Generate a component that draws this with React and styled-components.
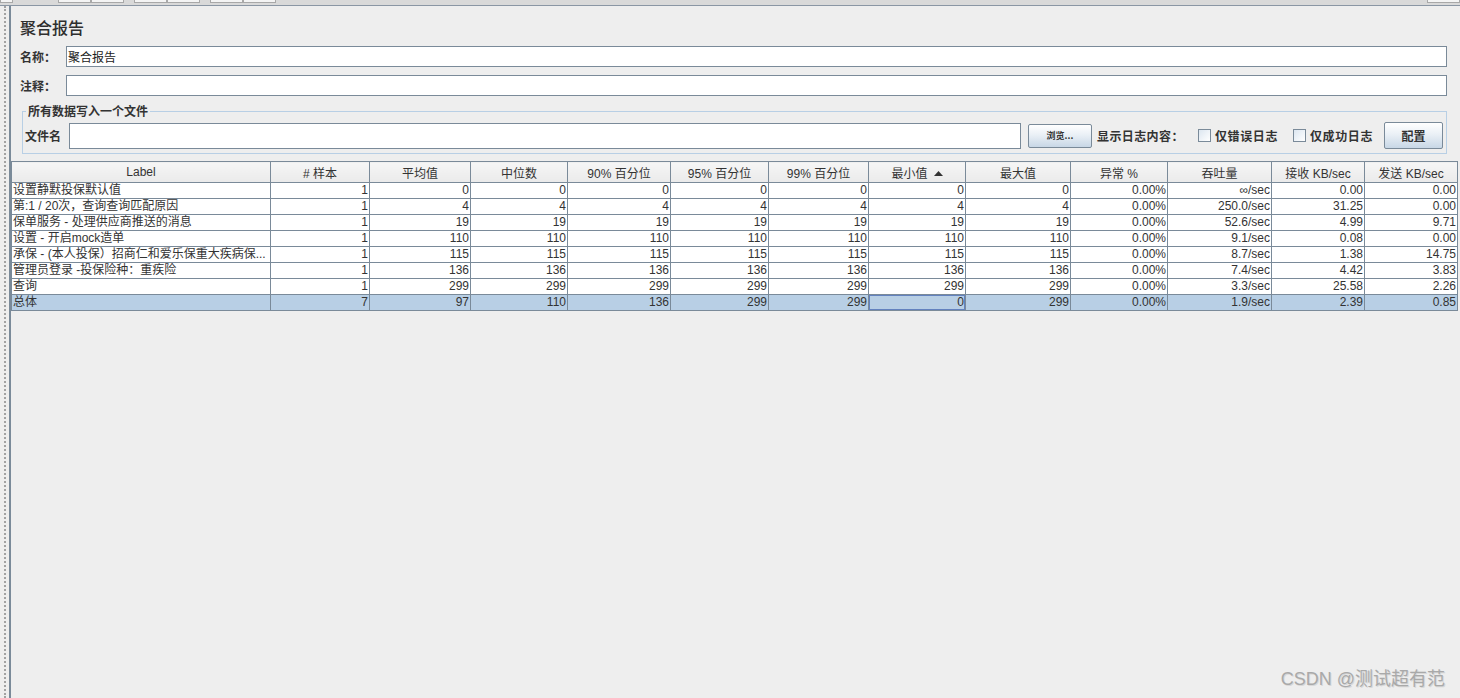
import React from "react"
import styled, { createGlobalStyle } from "styled-components"

const GlobalStyle = createGlobalStyle`
  html, body {
    margin: 0;
    padding: 0;
    background: #eeeeee;
  }
  body {
    font-family: "Liberation Sans", "Noto Sans CJK SC", sans-serif;
    font-size: 12px;
    color: #333333;
  }
`

const columns = [
  { title: "Label", width: 259 },
  { title: "# 样本", width: 99 },
  { title: "平均值", width: 101 },
  { title: "中位数", width: 97 },
  { title: "90% 百分位", width: 103 },
  { title: "95% 百分位", width: 98 },
  { title: "99% 百分位", width: 100 },
  { title: "最小值", width: 97, sorted: true },
  { title: "最大值", width: 105 },
  { title: "异常 %", width: 97 },
  { title: "吞吐量", width: 104 },
  { title: "接收 KB/sec", width: 93 },
  { title: "发送 KB/sec", width: 93 },
]

const rows = [
  ["设置静默投保默认值", "1", "0", "0", "0", "0", "0", "0", "0", "0.00%", "∞/sec", "0.00", "0.00"],
  ["第:1 / 20次，查询查询匹配原因", "1", "4", "4", "4", "4", "4", "4", "4", "0.00%", "250.0/sec", "31.25", "0.00"],
  ["保单服务 - 处理供应商推送的消息", "1", "19", "19", "19", "19", "19", "19", "19", "0.00%", "52.6/sec", "4.99", "9.71"],
  ["设置 - 开启mock造单", "1", "110", "110", "110", "110", "110", "110", "110", "0.00%", "9.1/sec", "0.08", "0.00"],
  ["承保 - (本人投保）招商仁和爱乐保重大疾病保...", "1", "115", "115", "115", "115", "115", "115", "115", "0.00%", "8.7/sec", "1.38", "14.75"],
  ["管理员登录 -投保险种：重疾险", "1", "136", "136", "136", "136", "136", "136", "136", "0.00%", "7.4/sec", "4.42", "3.83"],
  ["查询", "1", "299", "299", "299", "299", "299", "299", "299", "0.00%", "3.3/sec", "25.58", "2.26"],
]

const total = ["总体", "7", "97", "110", "136", "299", "299", "0", "299", "0.00%", "1.9/sec", "2.39", "0.85"]

const ReportPage = () => {
  return (
    <Page>
      <GlobalStyle />
      <TopStrip>
        <StripTab $w={13} />
        <StripGap $w={45} />
        <StripTab $w={33} />
        <StripTab $w={33} />
        <StripGap $w={10} />
        <StripTab $w={33} />
        <StripTab $w={33} />
        <StripGap $w={10} />
        <StripTab $w={33} />
        <StripTab $w={33} />
        <StripFill />
        <StripTab $w={33} />
      </TopStrip>
      <Main>
        <Splitter />
        <Panel>
          <Form>
            <Title>聚合报告</Title>
            <FieldRow>
              <FieldLabel $w={46}>名称：</FieldLabel>
              <TextInput defaultValue="聚合报告" />
            </FieldRow>
            <FieldRow>
              <FieldLabel $w={46}>注释：</FieldLabel>
              <TextInput defaultValue="" />
            </FieldRow>
            <FileGroup>
              <Legend>所有数据写入一个文件</Legend>
              <FileRow>
                <FieldLabel $w={44}>文件名</FieldLabel>
                <FileInput defaultValue="" />
                <BrowseButton>浏览...</BrowseButton>
                <LogLabel>显示日志内容：</LogLabel>
                <CheckItem>
                  <CheckBox />
                  <CheckText>仅错误日志</CheckText>
                </CheckItem>
                <CheckItem $last>
                  <CheckBox />
                  <CheckText>仅成功日志</CheckText>
                </CheckItem>
                <ConfigButton>配置</ConfigButton>
              </FileRow>
            </FileGroup>
          </Form>
          <Table>
            <colgroup>
              {columns.map((c) => (
                <col key={c.title} style={{ width: c.width }} />
              ))}
            </colgroup>
            <thead>
              <tr>
                {columns.map((c) => (
                  <HeadCell key={c.title}>
                    {c.title}
                    {c.sorted && <SortArrow viewBox="0 0 9 5"><path d="M0 5 L4.5 0 L9 5 Z" fill="#333" /></SortArrow>}
                  </HeadCell>
                ))}
              </tr>
            </thead>
            <tbody>
              {rows.map((r, i) => (
                <tr key={i}>
                  {r.map((v, j) => (
                    <Cell key={j} $left={j === 0}>{v}</Cell>
                  ))}
                </tr>
              ))}
              <tr>
                {total.map((v, j) => (
                  <Cell key={j} $left={j === 0} $selected $focus={j === 7}>{v}</Cell>
                ))}
              </tr>
            </tbody>
          </Table>
        </Panel>
      </Main>
      <Watermark>CSDN @测试超有范</Watermark>
    </Page>
  )
}

const Page = styled.div`
  position: relative;
  width: 1460px;
  height: 698px;
  display: flex;
  flex-direction: column;
  overflow: hidden;
  background: #eeeeee;
`

const TopStrip = styled.div`
  height: 5px;
  display: flex;
  background: #d9d9d9;
  border-bottom: 1px solid #8a96a4;
`

const StripTab = styled.div`
  width: ${(p) => p.$w}px;
  height: 3px;
  background: #f4f4f4;
  border: 1px solid #a8a8a8;
  border-top: none;
  box-sizing: border-box;
`

const StripGap = styled.div`
  width: ${(p) => p.$w}px;
`

const StripFill = styled.div`
  flex: 1;
`

const Main = styled.div`
  flex: 1;
  display: flex;
`

const Splitter = styled.div`
  width: 9px;
  position: relative;
  &::before {
    content: "";
    position: absolute;
    left: 4px;
    top: 0;
    bottom: 0;
    border-left: 2px dotted #a2a2a2;
  }
`

const Panel = styled.div`
  flex: 1;
  border-left: 2px solid #7a8a99;
  display: flex;
  flex-direction: column;
`

const Form = styled.div`
  padding: 11px 13px 0 9px;
`

const Title = styled.div`
  font-family: "Noto Sans CJK SC", sans-serif;
  font-size: 16px;
  font-weight: 500;
  line-height: 20px;
  color: #2e2e2e;
  margin-bottom: 9px;
`

const FieldRow = styled.div`
  display: flex;
  align-items: center;
  height: 21px;
  margin-bottom: 8px;
`

const FieldLabel = styled.div`
  width: ${(p) => p.$w}px;
  flex: none;
  font-family: "Noto Sans CJK SC", sans-serif;
  font-weight: bold;
  font-size: 12px;
  color: #333;
`

const TextInput = styled.input`
  flex: 1;
  min-width: 0;
  height: 21px;
  box-sizing: border-box;
  border: 1px solid #7a8a99;
  background: #fff;
  padding: 0 1px;
  font-family: "Noto Sans CJK SC", sans-serif;
  font-size: 12px;
  color: #222;
  outline: none;
`

const FileGroup = styled.fieldset`
  margin: 5px 0 0 2px;
  padding: 0 3px 4px 2px;
  border: 1px solid #b8cfe5;
  min-width: 0;
`

const Legend = styled.legend`
  padding: 0 2px;
  margin-left: 1px;
  line-height: 14px;
  font-family: "Noto Sans CJK SC", sans-serif;
  font-weight: bold;
  font-size: 12px;
  color: #333;
`

const FileRow = styled.div`
  display: flex;
  align-items: center;
  height: 27px;
  margin-top: 4px;
`

const FileInput = styled(TextInput)`
  height: 26px;
`

const BrowseButton = styled.button`
  flex: none;
  width: 64px;
  height: 24px;
  margin-left: 7px;
  border: 1px solid #7a8a99;
  border-radius: 2px;
  background: linear-gradient(to bottom, #ffffff 0%, #eaf0f6 45%, #c8d7e6 100%);
  font-family: "Noto Sans CJK SC", sans-serif;
  font-weight: bold;
  font-size: 9px;
  color: #333;
  padding: 0;
`

const ConfigButton = styled(BrowseButton)`
  width: 59px;
  height: 27px;
  margin-left: 10px;
  font-size: 12px;
`

const LogLabel = styled.div`
  flex: none;
  width: 101px;
  margin-left: 5px;
  font-family: "Noto Sans CJK SC", sans-serif;
  font-weight: bold;
  font-size: 12px;
  letter-spacing: 0.4px;
  color: #333;
  white-space: nowrap;
`

const CheckItem = styled.label`
  flex: none;
  display: flex;
  align-items: center;
  gap: 4px;
  margin-right: ${(p) => (p.$last ? 0 : 14)}px;
`

const CheckText = styled.span`
  width: 64px;
  font-family: "Noto Sans CJK SC", sans-serif;
  font-weight: bold;
  font-size: 12px;
  letter-spacing: 0.6px;
  color: #333;
  white-space: nowrap;
`

const CheckBox = styled.span`
  width: 13px;
  height: 13px;
  box-sizing: border-box;
  border: 1px solid #7a8a99;
  background: linear-gradient(135deg, #dce6f0 0%, #ffffff 100%);
`

const Table = styled.table`
  margin-top: 7px;
  width: 1446px;
  table-layout: fixed;
  border-collapse: collapse;
  font-family: "Liberation Sans", "Noto Sans CJK SC", sans-serif;
  font-size: 12px;
  color: #333;
`

const HeadCell = styled.th`
  height: 20px;
  padding: 0;
  border: 1px solid #7a8a99;
  background: linear-gradient(to bottom, #f6f6f6, #eaeaea);
  font-weight: normal;
  text-align: center;
  white-space: nowrap;
`

const SortArrow = styled.svg`
  width: 9px;
  height: 5px;
  margin-left: 6px;
  vertical-align: 2px;
`

const Cell = styled.td`
  height: 15px;
  padding: 0 1px;
  line-height: 15px;
  border: 1px solid #7a8a99;
  background: ${(p) => (p.$selected ? "#b8cfe5" : "#ffffff")};
  text-align: ${(p) => (p.$left ? "left" : "right")};
  white-space: nowrap;
  overflow: hidden;
  box-shadow: ${(p) => (p.$focus ? "inset 0 0 0 1px #6382bf" : "none")};
`

const Watermark = styled.div`
  position: absolute;
  right: 15px;
  bottom: 8px;
  font-family: "Liberation Sans", "Noto Sans CJK SC", sans-serif;
  font-size: 18px;
  color: #a9a9a9;
  text-shadow: 1px 1px 0 #d8d8d8;
`

export default ReportPage
